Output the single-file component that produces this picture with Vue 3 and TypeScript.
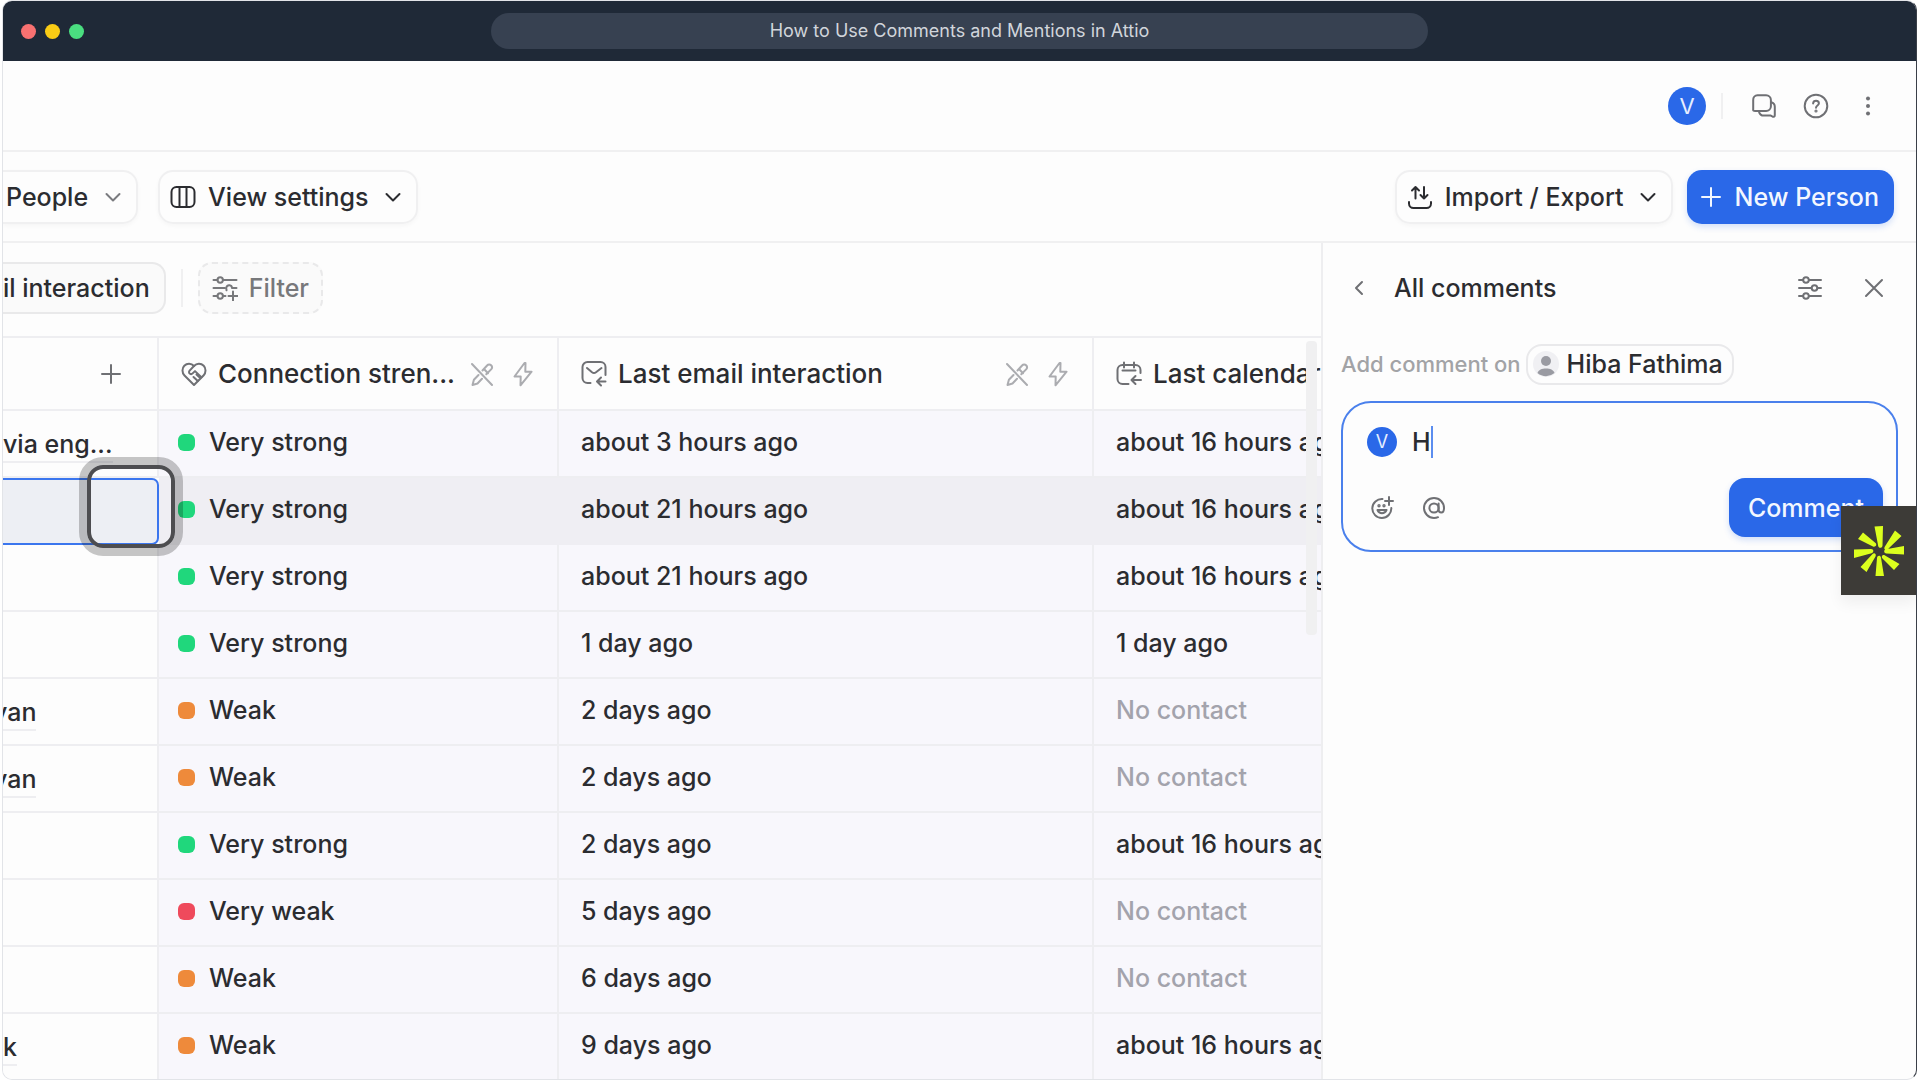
<script setup lang="ts">
import { ref } from 'vue'

type Strength = 'Very strong' | 'Weak' | 'Very weak'

interface Row {
  name: string
  strength: Strength
  email: string
  calendar: string
}

const rows: Row[] = [
  { name: 'via eng...', strength: 'Very strong', email: 'about 3 hours ago', calendar: 'about 16 hours ago' },
  { name: '', strength: 'Very strong', email: 'about 21 hours ago', calendar: 'about 16 hours ago' },
  { name: '', strength: 'Very strong', email: 'about 21 hours ago', calendar: 'about 16 hours ago' },
  { name: '', strength: 'Very strong', email: '1 day ago', calendar: '1 day ago' },
  { name: 'van', strength: 'Weak', email: '2 days ago', calendar: 'No contact' },
  { name: 'van', strength: 'Weak', email: '2 days ago', calendar: 'No contact' },
  { name: '', strength: 'Very strong', email: '2 days ago', calendar: 'about 16 hours ago' },
  { name: '', strength: 'Very weak', email: '5 days ago', calendar: 'No contact' },
  { name: '', strength: 'Weak', email: '6 days ago', calendar: 'No contact' },
  { name: 'k', strength: 'Weak', email: '9 days ago', calendar: 'about 16 hours ago' },
]

const dotClass: Record<Strength, string> = {
  'Very strong': 'green',
  Weak: 'orange',
  'Very weak': 'red',
}

const selected = 1
const draft = ref('H')
</script>

<template>
  <div class="window">
    <header class="titlebar">
      <div class="lights"><i class="l-red"></i><i class="l-yellow"></i><i class="l-green"></i></div>
      <div class="address">How to Use Comments and Mentions in Attio</div>
    </header>

    <div class="topbar">
      <span class="avatar large">V</span>
      <span class="rule"></span>
      <button class="icon-btn" aria-label="Comments">
        <svg width="26" height="26" viewBox="0 0 26 26">
          <path d="M6.5 2.2h8.6a4.8 4.8 0 0 1 4.8 4.8v6.2a4.8 4.8 0 0 1-4.8 4.8H4.2c-1.7 0-2.4-.7-2-2V7a4.6 4.6 0 0 1 4.3-4.8z" />
          <path d="M20.2 9.2c2.3.6 3.6 2.2 3.6 4.6v8.4c0 1.6-1 2-2.4 1.3l-1.6-.9h-6.9c-2.6 0-4.3-1.4-5-4.2" />
        </svg>
      </button>
      <button class="icon-btn" aria-label="Help">
        <svg width="26" height="26" viewBox="0 0 26 26">
          <circle cx="13" cy="13" r="11.3" />
          <path d="M10.1 10.4c.2-1.6 1.3-2.6 2.9-2.6s2.9 1 2.9 2.5c0 2.2-2.9 2.1-2.9 4.4" />
          <circle cx="13" cy="18" r=".6" />
        </svg>
      </button>
      <button class="icon-btn" aria-label="More">
        <svg width="26" height="26" viewBox="0 0 26 26" class="solid">
          <circle cx="13" cy="5.5" r="2" /><circle cx="13" cy="13" r="2" /><circle cx="13" cy="20.5" r="2" />
        </svg>
      </button>
    </div>

    <div class="toolbar">
      <button class="btn cut">
        People
        <svg class="chev soft" width="16" height="16" viewBox="0 0 16 16"><path d="M1.5 5L8 11.5 14.5 5" /></svg>
      </button>
      <button class="btn view">
        <svg width="26" height="26" viewBox="0 0 26 26"><rect x="1.5" y="3" width="23" height="20" rx="5" /><path d="M9.5 3v20M16.5 3v20" /></svg>
        View settings
        <svg class="chev" width="16" height="16" viewBox="0 0 16 16"><path d="M1.5 5L8 11.5 14.5 5" /></svg>
      </button>
      <span class="grow"></span>
      <button class="btn import">
        <svg width="26" height="26" viewBox="0 0 26 26">
          <path d="M2 18v1.500a4.500 4.500 0 0 0 4.500 4.500h13a4.500 4.500 0 0 0 4.500-4.500V18M8.500 14.500V3M5 6.500L8.500 3 12 6.500M17 3v11.500M13.500 11l3.500 3.500 3.500-3.500" />
        </svg>
        Import / Export
        <svg class="chev" width="16" height="16" viewBox="0 0 16 16"><path d="M1.5 5L8 11.5 14.5 5" /></svg>
      </button>
      <button class="btn primary new">
        <svg width="20" height="20" viewBox="0 0 20 20"><path d="M10 1v18M1 10h18" /></svg>
        New Person
      </button>
    </div>

    <div class="content">
      <main class="main">
        <div class="filters">
          <button class="chip cut">il interaction</button>
          <span class="rule tall"></span>
          <button class="chip dashed">
            <svg width="26" height="26" viewBox="0 0 26 26">
              <path d="M1.5 5h4M11 5h13.5M1.5 13H13M1.5 21h4M11 21h2.500M21 16.500v9M16.500 21h9" />
              <circle cx="8.200" cy="5" r="2.700" /><circle cx="8.200" cy="21" r="2.700" />
              <path d="M14.500 15.300c.3-.7-.6-1.700-.2-2.800.5-1.600 1.800-2.400 3.300-2.200 1.400.2 2.300 1.200 2.500 2.700h4.400" />
            </svg>
            Filter
          </button>
        </div>

        <div class="grid">
          <table>
            <colgroup><col class="c1" /><col class="c2" /><col class="c3" /><col /></colgroup>
            <thead>
              <tr>
                <th class="add">
                  <button class="icon-btn" aria-label="Add column">
                    <svg width="20" height="20" viewBox="0 0 20 20"><path d="M10 1v18M1 10h18" /></svg>
                  </button>
                </th>
                <th>
                  <div class="head">
                    <svg width="26" height="26" viewBox="0 0 26 26">
                      <path d="M13 24L3.500 14.500C.8 11.700.9 7.300 3.300 4.800 6 2.100 10.300 2.200 13 5c2.700-2.800 7-2.900 9.700-.2 2.400 2.500 2.500 6.900-.2 9.700L13 24z" />
                      <path d="M13 5L8.600 9.600c-.8.900-.7 2.200.1 2.900.9.700 2.100.7 2.900-.1l2.400-2.300 6.400 6.200M12.500 16l4.300 4M15.500 13.500l3.200 3" />
                    </svg>
                    <span class="label">Connection stren...</span>
                    <svg class="faint" width="24" height="26" viewBox="0 0 24 26">
                      <path d="M2 3l20 21M12.500 9.500l4.600-5c1.200-1.300 2.900-1.300 4-.2s1.100 2.900 0 4.100l-4.800 4.900M14 8l4 4.200M8.500 14l-4.600 4.800L2.500 24l5-1.500 4.500-4.700" />
                    </svg>
                    <svg class="faint" width="22" height="26" viewBox="0 0 22 26">
                      <path d="M12.500 2L2.500 15.500h6.200L8.500 24.300 19.600 10.700h-6.300L13.500 2z" />
                    </svg>
                  </div>
                </th>
                <th>
                  <div class="head">
                    <svg width="26" height="28" viewBox="0 0 26 28">
                      <path d="M9.500 23H6.500a5 5 0 0 1-5-5V7a5 5 0 0 1 5-5h13a5 5 0 0 1 5 5v8M6 8l5 4.200c1.300 1 2.700 1 4 0L20.500 8M24.500 21.500h-8M20 17.500l-4 4 4 4" />
                    </svg>
                    <span class="label">Last email interaction</span>
                    <svg class="faint" width="24" height="26" viewBox="0 0 24 26">
                      <path d="M2 3l20 21M12.500 9.500l4.600-5c1.200-1.300 2.900-1.300 4-.2s1.100 2.900 0 4.100l-4.800 4.900M14 8l4 4.200M8.500 14l-4.600 4.800L2.500 24l5-1.500 4.500-4.700" />
                    </svg>
                    <svg class="faint" width="22" height="26" viewBox="0 0 22 26">
                      <path d="M12.500 2L2.500 15.500h6.200L8.500 24.300 19.600 10.700h-6.300L13.500 2z" />
                    </svg>
                  </div>
                </th>
                <th>
                  <div class="head">
                    <svg width="26" height="26" viewBox="0 0 26 26">
                      <path d="M12.500 23H6.500a5 5 0 0 1-5-5V9a5 5 0 0 1 5-5h13a5 5 0 0 1 5 5v3M8 1.500v5M18 1.500v5M6.500 9.500h13M25 19h-9M19.500 15l-4 4 4 4" />
                    </svg>
                    <span class="label">Last calendar</span>
                  </div>
                </th>
              </tr>
            </thead>
            <tbody>
              <tr v-for="(row, i) in rows" :key="i" :class="{ selected: i === selected }">
                <td class="name">
                  <a v-if="row.name" href="#" :class="{ scrolled: row.name === 'van' }">{{ row.name }}</a>
                </td>
                <td class="tight"><span class="dot" :class="dotClass[row.strength]"></span>{{ row.strength }}</td>
                <td>{{ row.email }}</td>
                <td :class="{ muted: row.calendar === 'No contact' }">{{ row.calendar }}</td>
              </tr>
            </tbody>
          </table>
          <span class="pointer"></span>
          <span class="thumb"></span>
        </div>
      </main>

      <aside class="panel">
        <div class="panel-head">
          <button class="icon-btn" aria-label="Back">
            <svg width="16" height="16" viewBox="0 0 16 16"><path d="M11 2L5 8l6 6" /></svg>
          </button>
          <h2>All comments</h2>
          <span class="grow"></span>
          <button class="icon-btn" aria-label="Display options">
            <svg width="24" height="24" viewBox="0 0 24 24">
              <path d="M1 4h4M11 4h12M1 12h12M20 12h3M1 20h4M11 20h12" />
              <circle cx="8" cy="4" r="2.800" /><circle cx="16.500" cy="12" r="2.800" /><circle cx="8" cy="20" r="2.800" />
            </svg>
          </button>
          <button class="icon-btn" aria-label="Close">
            <svg width="20" height="20" viewBox="0 0 20 20"><path d="M2 2l16 16M18 2L2 18" /></svg>
          </button>
        </div>

        <div class="target">
          <span>Add comment on</span>
          <a href="#" class="person">
            <svg width="26" height="26" viewBox="0 0 26 26">
              <circle cx="13" cy="13" r="13" fill="#f0f0f3" />
              <circle cx="13" cy="10" r="5" fill="#9a9ba2" />
              <path d="M4.500 22c1-3.300 4.300-4.500 8.500-4.500s7.500 1.200 8.500 4.500a13 13 0 0 1-17 0z" fill="#9a9ba2" />
            </svg>
            Hiba Fathima
          </a>
        </div>

        <form class="composer" @submit.prevent>
          <div class="line">
            <span class="avatar">V</span>
            <input v-model="draft" size="1" aria-label="Comment text" /><i class="caret"></i>
          </div>
          <div class="actions">
            <button type="button" class="icon-btn" aria-label="Add emoji">
              <svg width="24" height="24" viewBox="0 0 24 24">
                <path d="M12.500 3a9.500 9.500 0 1 0 8.800 9M19 1v8M15 5h8M7.500 14c1 2.300 2.600 3.200 4.500 3.200s3.500-.9 4.500-3.200z" />
                <circle cx="9" cy="9.800" r=".7" /><circle cx="14" cy="9.800" r=".7" />
              </svg>
            </button>
            <button type="button" class="icon-btn" aria-label="Mention">
              <svg width="24" height="24" viewBox="0 0 24 24">
                <circle cx="12" cy="12" r="4.600" />
                <path d="M16.600 7.500v6c0 2 1 3 2.600 3s2.800-1.500 2.800-4.500c0-5.500-4.300-10-10-10S2 6.500 2 12s4.500 10 10 10c1.500 0 3-.3 4-.8" />
              </svg>
            </button>
            <span class="grow"></span>
            <button class="btn primary send">Comment</button>
          </div>
          <span class="badge">
            <svg width="52" height="52" viewBox="0 0 52 52">
              <path d="M21.500 1.500L30 1l-.5 19.500c-.2 3-4 3-4.300.500zM42 5.500l6.500 5.500-14 13.500c-2 1.500-4-.4-2.900-2.500zM51 21v8.500l-17.500-1c-3-.4-3-3.800-.4-4.300zM46.500 39L41 45 29.500 33.500c-1.800-2 .3-4.500 2.500-3zM31 51h-8.500L24 33c.3-2.800 3.500-3 4-.3zM13.500 47l-6-5 12-13c1.900-1.800 4.200.1 3 2.500zM1 33v-8.500l17-.5c2.800 0 3.200 3.400.6 4.200zM5 14l5-6.500 12.500 10.500c1.900 1.800 0 4.500-2.500 3.500z" fill="#dcff1e" stroke="none" />
            </svg>
          </span>
        </form>
      </aside>
    </div>
  </div>
</template>

<style>
body {
  margin: 0;
  background: #fff;
}
</style>

<style scoped>
* {
  box-sizing: border-box;
}
.window {
  display: flex;
  flex-direction: column;
  margin: 0 3px 0 2px;
  height: 100vh;
  border: 1px solid #e2e4e8;
  border-right-color: #3a3f48;
  border-radius: 10px;
  overflow: hidden;
  background: #fdfdfd;
  font-family: Inter, 'Liberation Sans', sans-serif;
  font-size: 25px;
  font-weight: 500;
  line-height: 32px;
  color: #2b2c30;
}
button,
input {
  font: inherit;
  color: inherit;
  padding: 0;
  border: 0;
  background: none;
}
a {
  color: inherit;
  text-decoration: none;
}
svg {
  display: block;
  flex: none;
  fill: none;
  stroke: currentColor;
  stroke-width: 2;
  stroke-linecap: round;
  stroke-linejoin: round;
}
.grow {
  flex: 1;
}
.titlebar {
  flex: none;
  display: flex;
  align-items: center;
  justify-content: center;
  position: relative;
  height: 60px;
  background: #1f2937;
}
.lights {
  position: absolute;
  left: 18px;
  display: flex;
  gap: 9px;
}
.lights i {
  width: 15px;
  height: 15px;
  border-radius: 50%;
}
.l-red {
  background: #f87171;
}
.l-yellow {
  background: #facc15;
}
.l-green {
  background: #4ade80;
}
.address {
  width: 49%;
  height: 36px;
  border-radius: 18px;
  background: #374151;
  color: #d1d5db;
  font-size: 18px;
  font-weight: 400;
  line-height: 36px;
  text-align: center;
}
.topbar {
  flex: none;
  display: flex;
  align-items: center;
  justify-content: flex-end;
  height: 91px;
  padding-right: 35px;
  border-bottom: 2px solid #f0f0f1;
}
.icon-btn {
  display: flex;
  align-items: center;
  justify-content: center;
  color: #6f7074;
}
.topbar .icon-btn {
  margin-left: 26px;
}
.solid {
  fill: currentColor;
  stroke: none;
}
.avatar {
  display: flex;
  align-items: center;
  justify-content: center;
  flex: none;
  width: 30px;
  height: 30px;
  border-radius: 50%;
  background: #2a68e8;
  color: #e6eeff;
  font-size: 18px;
  font-weight: 400;
}
.avatar.large {
  width: 38px;
  height: 38px;
  font-size: 22px;
}
.rule {
  width: 2px;
  height: 26px;
  margin: 0 2px 0 15px;
  background: #f0f0f1;
}
.rule.tall {
  height: 38px;
  margin: 0 15px;
}
.toolbar {
  flex: none;
  display: flex;
  align-items: center;
  height: 91px;
  padding-right: 22px;
  border-bottom: 2px solid #f0f0f1;
}
.btn {
  display: flex;
  align-items: center;
  height: 54px;
  border: 2px solid #f0f0f1;
  border-radius: 15px;
  box-shadow: 0 2px 4px rgba(0, 0, 0, 0.03);
  white-space: nowrap;
}
.btn.cut {
  padding: 0 15px 0 3px;
  border-left: 0;
  border-radius: 0 15px 15px 0;
}
.chev {
  margin-left: 17px;
}
.soft {
  color: #7a7b7f;
}
.view {
  margin-left: 20px;
  padding: 0 15px 0 10px;
  gap: 12px;
}
.view .chev,
.import .chev {
  margin-left: 4px;
}
.import {
  margin-right: 14px;
  padding: 0 15px 0 10px;
  gap: 12px;
}
.btn.primary {
  border: 0;
  background: #2a68e8;
  color: #f3f7ff;
  box-shadow: 0 3px 6px rgba(42, 104, 232, 0.2);
}
.new {
  padding: 0 15px 0 14px;
  gap: 14px;
}
.content {
  flex: 1;
  display: flex;
  min-height: 0;
}
.main {
  flex: 1;
  min-width: 0;
  display: flex;
  flex-direction: column;
}
.filters {
  flex: none;
  display: flex;
  align-items: center;
  height: 93px;
  padding-bottom: 4px;
}
.chip {
  display: flex;
  align-items: center;
  gap: 11px;
  height: 52px;
  padding: 0 14px;
  border: 2px solid #e9e9ea;
  border-radius: 14px;
  background: #fafafa;
  white-space: nowrap;
}
.chip.cut {
  padding-left: 0;
  border-left: 0;
  border-radius: 0 14px 14px 0;
}
.chip.dashed {
  padding: 0 12px;
  border-style: dashed;
  color: #77787b;
}
.grid {
  flex: 1;
  position: relative;
  overflow: hidden;
}
table {
  width: 100%;
  table-layout: fixed;
  border-collapse: separate;
  border-spacing: 0;
}
.c1 {
  width: 156px;
}
.c2 {
  width: 400px;
}
.c3 {
  width: 535px;
}
th,
td {
  height: 67px;
  padding: 0 0 0 22px;
  border-bottom: 2px solid #eeeef1;
  border-right: 2px solid #eeeef1;
  overflow: hidden;
  text-align: left;
  font-weight: 500;
  white-space: nowrap;
}
th {
  height: 75px;
  border-top: 2px solid #eeeef1;
  font-size: 26px;
}
th:last-child,
td:last-child {
  border-right: 0;
}
td {
  padding-bottom: 3px;
  background: #f8f7fc;
}
td.tight {
  padding-left: 19px;
}
.add .icon-btn {
  margin-left: 76px;
}
.head {
  display: flex;
  align-items: center;
  gap: 11px;
  padding-right: 23px;
}
.head > svg {
  color: #6f7074;
}
.head > svg.faint {
  color: #abacb0;
}
.head .faint + .faint {
  margin-left: 7px;
}
.label {
  flex: 1;
}
td.name {
  padding: 0;
  background: #fdfdfd;
}
.name a {
  display: inline-block;
  padding: 4px 0 1px;
  border-bottom: 2px solid #eeeef1;
}
.name .scrolled {
  margin-left: -10px;
}
.dot {
  display: inline-block;
  width: 17px;
  height: 17px;
  margin-right: 14px;
  border-radius: 6px;
}
.green {
  background: #20d77c;
}
.orange {
  background: #ee8a3b;
}
.red {
  background: #ef4a5c;
}
.muted {
  color: #a3a3ac;
}
.selected td {
  background: #efeef3;
  border-color: #efeef3;
}
.selected .name {
  background: #edeff4;
  border: 2px solid #3b76ee;
  border-left: 0;
  border-radius: 0 7px 7px 0;
}
.pointer {
  position: absolute;
  left: 76px;
  top: 121px;
  width: 104px;
  height: 99px;
  border: 8px solid rgba(0, 0, 0, 0.22);
  border-radius: 24px;
}
.pointer::after {
  content: '';
  position: absolute;
  inset: 0;
  border: 4px solid #4d4d50;
  border-radius: 16px;
}
.thumb {
  position: absolute;
  right: 4px;
  top: 5px;
  width: 11px;
  height: 294px;
  border-radius: 4px;
  background: #f0f0f1;
}
.panel {
  flex: none;
  width: 595px;
  padding: 0 18px;
  border-left: 2px solid #eeeef0;
}
.panel-head {
  display: flex;
  align-items: center;
  height: 90px;
  padding: 0 14px 0 10px;
}
.panel-head h2 {
  margin: 0 0 0 27px;
  font-size: 25px;
  font-weight: 500;
}
.panel-head .icon-btn:last-child {
  margin-left: 42px;
}
.target {
  display: flex;
  align-items: center;
  gap: 5px;
  height: 62px;
  color: #a2a3a6;
  font-size: 22px;
  white-space: nowrap;
}
.person {
  display: flex;
  align-items: center;
  gap: 8px;
  height: 41px;
  padding: 0 9px 0 5px;
  border: 2px solid #e9e9eb;
  border-radius: 16px;
  color: #2b2c30;
  font-size: 25px;
}
.person svg {
  stroke: none;
}
.composer {
  position: relative;
  display: flex;
  flex-direction: column;
  justify-content: space-between;
  height: 151px;
  margin-top: 6px;
  padding: 23px 13px 13px 24px;
  border: 2px solid #4a80ec;
  border-radius: 30px;
}
.line {
  display: flex;
  align-items: center;
}
.line input {
  width: 19px;
  margin-left: 15px;
  outline: 0;
}
.caret {
  width: 2px;
  height: 32px;
  background: #5b8def;
}
.actions {
  display: flex;
  align-items: center;
  gap: 28px;
  padding-left: 3px;
}
.send {
  height: 59px;
  padding: 0 19px;
  border-radius: 16px;
}
.badge {
  position: absolute;
  right: -20px;
  top: 103px;
  display: flex;
  align-items: center;
  justify-content: center;
  width: 75px;
  height: 89px;
  background: #3d3b37;
  box-shadow: 0 8px 14px rgba(0, 0, 0, 0.06);
}
</style>
